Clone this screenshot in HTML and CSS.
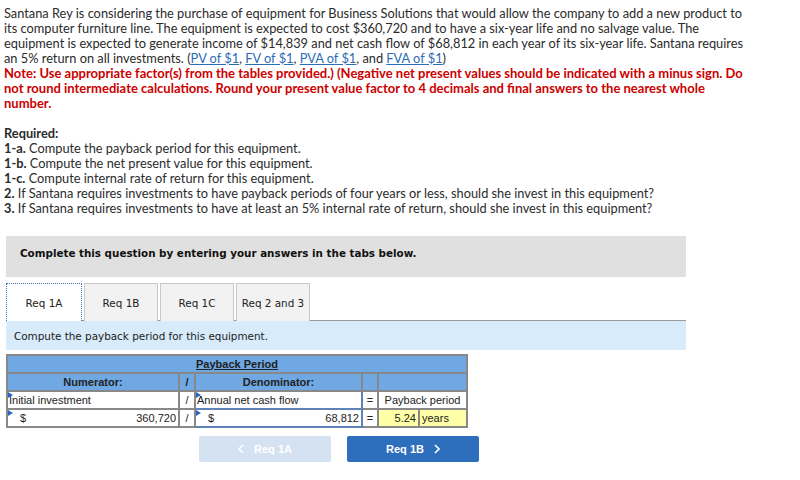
FILE: index.html
```html
<!DOCTYPE html>
<html>
<head>
<meta charset="utf-8">
<link rel="stylesheet" href="styles.css">
</head>
<body>
<div class="page">
  <p class="intro">Santana Rey is considering the purchase of equipment for Business Solutions that would allow the company to add a new product to<br>its computer furniture line. The equipment is expected to cost $360,720 and to have a six-year life and no salvage value. The<br>equipment is expected to generate income of $14,839 and net cash flow of $68,812 in each year of its six-year life. Santana requires<br>an 5% return on all investments. (<a href="#">PV of $1</a>, <a href="#">FV of $1</a>, <a href="#">PVA of $1</a>, and <a href="#">FVA of $1</a>)<br><span class="note">Note: Use appropriate factor(s) from the tables provided.) (Negative net present values should be indicated with a minus sign. Do<br>not round intermediate calculations. Round your present value factor to 4 decimals and final answers to the nearest whole<br>number.</span></p>
  <p class="req"><b>Required:</b><br><b>1-a.</b> Compute the payback period for this equipment.<br><b>1-b.</b> Compute the net present value for this equipment.<br><b>1-c.</b> Compute internal rate of return for this equipment.<br><b>2.</b> If Santana requires investments to have payback periods of four years or less, should she invest in this equipment?<br><b>3.</b> If Santana requires investments to have at least an 5% internal rate of return, should she invest in this equipment?</p>

  <div class="quiz">
    <div class="banner">Complete this question by entering your answers in the tabs below.</div>
    <div class="tabs">
      <div class="tab active">Req 1A</div>
      <div class="tab">Req 1B</div>
      <div class="tab">Req 1C</div>
      <div class="tab">Req 2 and 3</div>
    </div>
    <div class="instr">Compute the payback period for this equipment.</div>

    <table class="pb">
      <colgroup>
        <col class="c-num"><col class="c-op"><col class="c-den"><col class="c-op"><col class="c-val"><col class="c-unit">
      </colgroup>
      <tr class="hd">
        <td colspan="6"><span class="title">Payback Period</span></td>
      </tr>
      <tr class="hd">
        <td>Numerator:</td>
        <td>/</td>
        <td>Denominator:</td>
        <td></td>
        <td colspan="2"></td>
      </tr>
      <tr>
        <td class="inp num"><span class="flag"></span>Initial investment</td>
        <td class="op">/</td>
        <td class="inp den"><span class="flag"></span>Annual net cash flow</td>
        <td class="op">=</td>
        <td colspan="2" class="center">Payback period</td>
      </tr>
      <tr>
        <td class="inp num"><span class="flag"></span><span class="cur">$</span><span class="amt">360,720</span></td>
        <td class="op">/</td>
        <td class="inp den"><span class="flag"></span><span class="cur">$</span><span class="amt">68,812</span></td>
        <td class="op">=</td>
        <td class="res val">5.24</td>
        <td class="res unit">years</td>
      </tr>
    </table>

    <div class="nav">
      <div class="btn prev"><svg width="6" height="10" viewBox="0 0 6 10"><polyline points="5,1 1,5 5,9" fill="none" stroke="#fff" stroke-width="1.6"/></svg><span>Req 1A</span></div>
      <div class="btn next"><span>Req 1B</span><svg width="6" height="10" viewBox="0 0 6 10"><polyline points="1,1 5,5 1,9" fill="none" stroke="#fff" stroke-width="1.6"/></svg></div>
    </div>
  </div>
</div>
</body>
</html>
```

FILE: styles.css
```css
* { box-sizing: border-box; }
body {
  margin: 0;
  background: #fff;
  color: #2b2b2b;
  font-family: Lato, "Open Sans", "Liberation Sans", sans-serif;
}
.page {
  padding: 6px 4px 0 4px;
}
p {
  margin: 0;
  font-size: 12.8px;
  line-height: 15px;
  white-space: nowrap;
}
.intro a {
  color: #2c6cb5;
  text-decoration: underline;
}
.note {
  color: #cc0000;
  font-weight: bold;
  font-size: 13px;
}
.req {
  margin-top: 15px;
}
.quiz {
  margin-top: 20px;
  margin-left: 2px;
  width: 680px;
}
.banner {
  height: 41px;
  background: #e0e0e0;
  padding: 10px 14px 0;
  font-family: "DejaVu Sans", Verdana, sans-serif;
  font-weight: bold;
  font-size: 10.35px;
  line-height: 14px;
  color: #111;
}
.tabs {
  display: flex;
  gap: 2px;
  margin-top: 6px;
  height: 38px;
  border-bottom: 1px solid #9a9a9a;
}
.tab {
  width: 74px;
  height: 38px;
  background: #f2f2f2;
  border: 1px solid #c8c8c8;
  border-bottom: none;
  display: flex;
  align-items: center;
  justify-content: center;
  font-family: "DejaVu Sans", Verdana, sans-serif;
  font-size: 10.4px;
  color: #222;
}
.tab.active {
  width: 76px;
  background: #fff;
  border: 1px dotted #3d6fb5;
  border-bottom: none;
  height: 38px;
  position: relative;
  z-index: 1;
  margin-bottom: -1px;
}
.instr {
  height: 29px;
  background: #d7ebfa;
  padding: 0 8px;
  display: flex;
  align-items: center;
  font-family: "DejaVu Sans", Verdana, sans-serif;
  font-size: 10.4px;
  color: #222;
}
.pb {
  margin-top: 4px;
  border-collapse: collapse;
  border: 2px solid #888;
  width: 461px;
  table-layout: fixed;
  font-family: "Liberation Sans", Arial, sans-serif;
  font-size: 11px;
  line-height: 13px;
  color: #222;
}
.c-num { width: 172px; }
.c-op { width: 16px; }
.c-den { width: 167px; }
.c-val { width: 41px; }
.c-unit { width: 48px; }
.pb td {
  border: 2px solid #888;
  height: 18px;
  padding: 0 2px;
  white-space: nowrap;
  position: relative;
}
.pb tr.hd td {
  background: #6fa8e2;
  font-weight: bold;
  text-align: center;
}
.title {
  text-decoration: underline;
}
.pb td.op {
  text-align: center;
  padding: 0;
}
.pb td.inp {
  padding-left: 1px;
}
.pb td.den {
  border-color: #5f82b8;
}
.pb td.center {
  text-align: center;
}
.flag {
  position: absolute;
  left: 0;
  top: 0;
  width: 0;
  height: 0;
  border-left: 5px solid #2c63c8;
  border-top: 3px solid transparent;
  border-bottom: 3px solid transparent;
}
.inp .cur {
  margin-left: 11px;
}
.inp .amt {
  float: right;
}
.pb td.res {
  background: #ffffa8;
}
.pb td.val {
  text-align: right;
}
.nav {
  display: flex;
  gap: 16px;
  margin-top: 8px;
  margin-left: 193px;
}
.btn {
  width: 132px;
  height: 26px;
  border-radius: 2px;
  display: flex;
  align-items: center;
  justify-content: center;
  gap: 10px;
  color: #fff;
  font-family: "Liberation Sans", Arial, sans-serif;
  font-weight: bold;
  font-size: 11px;
}
.btn.prev {
  background: #d5e2f2;
}
.btn.next {
  background: #2e6fbd;
}
.btn svg {
  display: block;
}
```
